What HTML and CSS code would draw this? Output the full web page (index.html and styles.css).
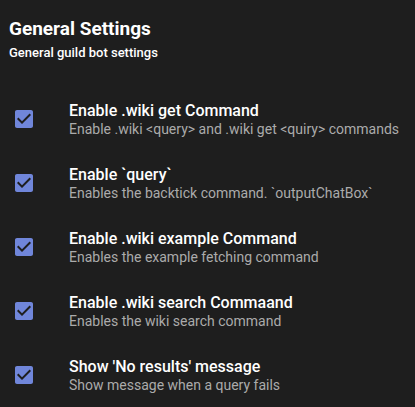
FILE: index.html
```html
<!DOCTYPE html>
<html>
<head>
<meta charset="utf-8">
<link rel="stylesheet" href="styles.css">
</head>
<body>
<div class="panel">
  <h1 class="title">General Settings</h1>
  <p class="subtitle">General guild bot settings</p>
  <div class="list">
    <div class="row">
      <span class="check"><svg viewBox="0 0 24 24" width="24" height="24"><path fill-rule="evenodd" d="M19 3H5c-1.11 0-2 .9-2 2v14c0 1.1.89 2 2 2h14c1.11 0 2-.9 2-2V5c0-1.1-.89-2-2-2zm-9 14l-5-5 1.41-1.41L10 14.17l7.59-7.59L19 8l-9 9z"/></svg></span>
      <div class="text">
        <div class="label">Enable .wiki get Command</div>
        <div class="desc">Enable .wiki &lt;query&gt; and .wiki get &lt;quiry&gt; commands</div>
      </div>
    </div>
    <div class="row">
      <span class="check"><svg viewBox="0 0 24 24" width="24" height="24"><path fill-rule="evenodd" d="M19 3H5c-1.11 0-2 .9-2 2v14c0 1.1.89 2 2 2h14c1.11 0 2-.9 2-2V5c0-1.1-.89-2-2-2zm-9 14l-5-5 1.41-1.41L10 14.17l7.59-7.59L19 8l-9 9z"/></svg></span>
      <div class="text">
        <div class="label">Enable `query`</div>
        <div class="desc">Enables the backtick command. `outputChatBox`</div>
      </div>
    </div>
    <div class="row">
      <span class="check"><svg viewBox="0 0 24 24" width="24" height="24"><path fill-rule="evenodd" d="M19 3H5c-1.11 0-2 .9-2 2v14c0 1.1.89 2 2 2h14c1.11 0 2-.9 2-2V5c0-1.1-.89-2-2-2zm-9 14l-5-5 1.41-1.41L10 14.17l7.59-7.59L19 8l-9 9z"/></svg></span>
      <div class="text">
        <div class="label">Enable .wiki example Command</div>
        <div class="desc">Enables the example fetching command</div>
      </div>
    </div>
    <div class="row">
      <span class="check"><svg viewBox="0 0 24 24" width="24" height="24"><path fill-rule="evenodd" d="M19 3H5c-1.11 0-2 .9-2 2v14c0 1.1.89 2 2 2h14c1.11 0 2-.9 2-2V5c0-1.1-.89-2-2-2zm-9 14l-5-5 1.41-1.41L10 14.17l7.59-7.59L19 8l-9 9z"/></svg></span>
      <div class="text">
        <div class="label">Enable .wiki search Commaand</div>
        <div class="desc">Enables the wiki search command</div>
      </div>
    </div>
    <div class="row">
      <span class="check"><svg viewBox="0 0 24 24" width="24" height="24"><path fill-rule="evenodd" d="M19 3H5c-1.11 0-2 .9-2 2v14c0 1.1.89 2 2 2h14c1.11 0 2-.9 2-2V5c0-1.1-.89-2-2-2zm-9 14l-5-5 1.41-1.41L10 14.17l7.59-7.59L19 8l-9 9z"/></svg></span>
      <div class="text">
        <div class="label">Show 'No results' message</div>
        <div class="desc">Show message when a query fails</div>
      </div>
    </div>
  </div>
</div>
</body>
</html>
```
FILE: styles.css
```css
html, body {
  margin: 0;
  padding: 0;
  background: #1e1e1e;
  font-family: Roboto, "Liberation Sans", sans-serif;
  color: #ffffff;
}
.panel {
  padding: 17px 9px 0 9px;
}
.title {
  margin: 0;
  font-size: 19px;
  line-height: 24px;
  font-weight: 700;
}
.subtitle {
  margin: 4px 0 0 0;
  font-size: 13px;
  line-height: 16px;
  font-weight: 500;
}
.list {
  margin-top: 26px;
  display: flex;
  flex-direction: column;
}
.row {
  height: 64px;
  display: flex;
  align-items: center;
}
.check {
  width: 24px;
  height: 24px;
  margin-left: 3px;
  margin-right: 33px;
  display: flex;
}
.check svg {
  fill: #7086da;
  background: #1e1e1e;
}
.text {
  display: flex;
  flex-direction: column;
}
.label {
  font-size: 16px;
  line-height: 20px;
  font-weight: 500;
  color: #ffffff;
}
.desc {
  font-size: 14px;
  line-height: 17px;
  color: #ababab;
}
```
